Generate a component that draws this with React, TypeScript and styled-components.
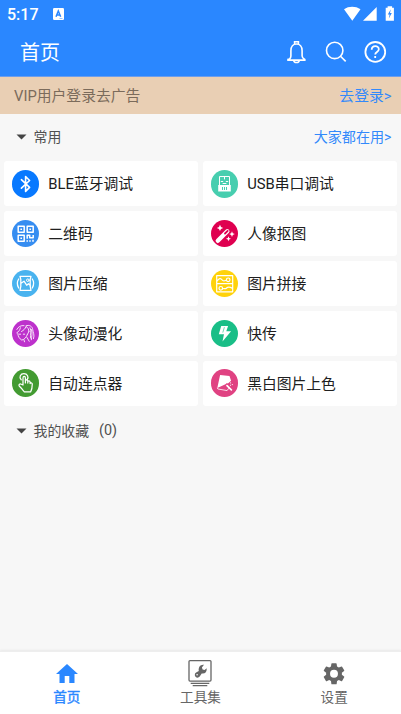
import React from "react";
import styled, { createGlobalStyle } from "styled-components";

const Global = createGlobalStyle`
  * { box-sizing: border-box; }
  body {
    margin: 0;
    background: #f7f7f7;
    font-family: Roboto, "Noto Sans CJK SC", sans-serif;
  }
`;

const Screen = styled.main`
  display: flex;
  flex-direction: column;
  width: 100%;
  height: 714px;
  overflow: hidden;
  background: #f7f7f7;
`;

const StatusBar = styled.div`
  display: flex;
  align-items: center;
  height: 27px;
  padding: 1px 7px 0 7px;
  background: #2a87ff;
  color: #fff;
  font-size: 16px;
  font-weight: 500;
  flex: none;
`;

const Clock = styled.span`
  width: 46px;
  padding-top: 1px;
  line-height: 26px;
`;

const StatusIcons = styled.div`
  display: flex;
  align-items: center;
  margin-left: auto;
  padding-bottom: 1px;
`;

const AppBar = styled.header`
  display: flex;
  align-items: center;
  height: 50px;
  padding: 0 14px 0 20px;
  background: #2a87ff;
  border-bottom: 1px solid #6c9eed;
  color: #fff;
  flex: none;
`;

const Title = styled.h1`
  margin: 0;
  padding-top: 2px;
  font-size: 20px;
  line-height: 30px;
  font-weight: 400;
`;

const Actions = styled.div`
  display: flex;
  gap: 15px;
  margin-left: auto;
  padding-top: 1px;
`;

const Banner = styled.div`
  display: flex;
  align-items: center;
  justify-content: space-between;
  height: 37px;
  padding: 0 9.5px 2px 14px;
  background: #e9cfb4;
  color: #7b6b5b;
  font-size: 14.8px;
  flex: none;
`;

const BlueLink = styled.span`
  color: #3289fb;
`;

const SectionHeader = styled.div<{ $height: number }>`
  display: flex;
  align-items: center;
  height: ${(p) => p.$height}px;
  padding: 0 9.5px 3px 16px;
  color: #505050;
  font-size: 13.9px;
  flex: none;

  svg { margin: 2px 6.5px 0 0; }
  ${BlueLink} {
    margin-left: auto;
    font-size: 14.1px;
  }
`;

const Count = styled.span`
  margin-left: 10px;
  padding-top: 1px;
  font-size: 14.4px;
`;

const Grid = styled.div`
  display: grid;
  grid-template-columns: 1fr 1fr;
  grid-auto-rows: 45.1px;
  gap: 4.7px;
  padding: 0 4px;
  flex: none;
`;

const Card = styled.div`
  display: flex;
  align-items: center;
  gap: 8.8px;
  padding-left: 8.1px;
  border-radius: 3px;
  background: #fff;
  color: #202020;
  font-size: 14.8px;
  white-space: nowrap;
`;

const CardLabel = styled.span`
  padding-bottom: 2px;
`;

const Disc = styled.span<{ $color: string }>`
  display: flex;
  width: 27.4px;
  height: 27.4px;
  border-radius: 50%;
  background: ${(p) => p.$color};
  flex: none;

  svg {
    width: 100%;
    height: 100%;
    fill: none;
    stroke: #fff;
    stroke-width: 1;
    stroke-linecap: round;
    stroke-linejoin: round;
  }
`;

const Nav = styled.nav`
  display: grid;
  grid-template-columns: repeat(3, 1fr);
  height: 63px;
  margin-top: auto;
  background: #fff;
  border-top: 1px solid #eee;
  box-shadow: 0 -1px 2px rgba(0, 0, 0, 0.06);
  flex: none;
`;

const NavItem = styled.div<{ $active?: boolean }>`
  display: flex;
  flex-direction: column;
  align-items: center;
  padding-top: 7px;
  color: ${(p) => (p.$active ? "#2a87ff" : "#666")};
  font-size: 13.6px;
  -webkit-text-stroke: ${(p) => (p.$active ? "0.4px currentColor" : "0")};
  line-height: 21px;
`;

const Caret = () => (
  <svg width="11" height="6" viewBox="0 0 11 6">
    <path d="M.5.5h10l-5 5z" fill="#444" />
  </svg>
);

const tools: { name: string; color: string; icon: React.ReactNode }[] = [
  {
    name: "BLE蓝牙调试",
    color: "#0879ff",
    icon: <path d="M9.4 9.7l8.2 7.7-4 4V6.5l4 4-8.2 7.7" strokeWidth="1.6" />,
  },
  {
    name: "USB串口调试",
    color: "#47ceaf",
    icon: (
      <>
        <path d="M8.5 15V6.5h10V15M13.5 7v2M10.2 11.5h1.6m3.4 0h1.6M12 13.5h3" />
        <path d="M7.2 15h12.6v6.5H7.2z" fill="#fff" stroke="none" />
        <path d="M11.5 17v3m2-3v3m2-3v3" stroke="#47ceaf" strokeLinecap="butt" />
      </>
    ),
  },
  {
    name: "二维码",
    color: "#368df1",
    icon: (
      <>
        <path d="M6.2 6.2h6v6h-6zM15.2 6.2h6v6h-6zM6.2 15.2h6v6h-6z" strokeWidth="1.5" />
        <path d="M8.4 8.4H10V10H8.4zM17.4 8.4H19V10h-1.6zM8.4 17.4H10V19H8.4z" fill="#fff" stroke="none" />
        <path d="M15.2 18.7v-3.5h2.5v2.5h3.5v-2.7M15.2 20.2v1.5m2.8-1.5v1.5m3-2v2" strokeWidth="1.5" strokeLinecap="butt" />
      </>
    ),
  },
  {
    name: "人像抠图",
    color: "#df0050",
    icon: (
      <>
        <path d="M6.8 20.8l9.5-9.5" strokeWidth="4.4" />
        <path d="M14 13.5l2.7-2.7" stroke="#df0050" strokeWidth="1.8" />
        <path
          d="M9 4.7l1 2.2 2.2 1-2.2 1-1 2.2-1-2.2-2.2-1 2.2-1zM21 11.3l.8 2 2 .8-2 .8-.8 2-.8-2-2-.8 2-.8zM17.5 16.3l.7 1.8 1.8.7-1.8.7-.7 1.8-.7-1.8-1.8-.7 1.8-.7z"
          fill="#fff"
          stroke="none"
        />
      </>
    ),
  },
  {
    name: "图片压缩",
    color: "#49b3ef",
    icon: (
      <>
        <path d="M8 6.3h11l-.8 3v7l.8 4H8l.8-4v-7zM9 13.2l3-2 2.7 4 1.8-1.5 2 2.2M6.7 9c-1.7 2.5-1.7 6 0 9M20.3 9c1.7 2.5 1.7 6 0 9" strokeWidth="1.3" />
        <circle cx="15.8" cy="10.2" r="1.3" />
      </>
    ),
  },
  {
    name: "图片拼接",
    color: "#ffd20a",
    icon: (
      <>
        <path d="M5.7 5.6h16v16.2h-16zM5.7 13.7h16M6.2 10.8c2-2.6 3.5-3 5-.8 1 1.5 2.4.8 4 .3M11.8 18.8c1.3-1 2.3.7 3.5-.5s3-1.9 5.9 0" strokeWidth="1.2" />
        <circle cx="17.2" cy="9.8" r="1.8" strokeWidth="1.2" />
        <circle cx="9.8" cy="18.3" r="1.8" strokeWidth="1.2" />
      </>
    ),
  },
  {
    name: "头像动漫化",
    color: "#bd31cc",
    icon: (
      <path
        d="M4.8 9.5c1.5-2.8 4-4.3 7.2-3.9M4.8 12.8c2.2-1.2 3.1-2.8 3.6-5M9.5 11.5c2.2-1.2 3.8-2.8 4.5-5 2 1 2.8 2.8 2.9 4.8M5.8 13.5c.2 3 1.6 5.2 4 6.6 2.8-.6 4.5-2.8 5.5-5.4M7.3 14.2h1.3m2.7 0h1.4M14 5.8c3.4-1.3 6.4.5 6.7 3.7.3 3 2.2 5.2.8 9.2M18 7.8c2 3.5-.2 6.8.6 10.3M19.5 9.5c1.2 3.7.2 6.7-.2 10.3M15 17.5l2.2 3.8M12 20l.5 1.8M17 11.3l-1.6 3.2"
        strokeWidth=".85"
      />
    ),
  },
  {
    name: "快传",
    color: "#19be87",
    icon: (
      <>
        <path d="M10.2 6h6.9l-1.8 5.2h4.8l-8.6 10.3 1.5-7.2H7.8z" fill="#fff" stroke="none" />
        <path d="M13.3 7.5l-1.4 4.7" stroke="#19be87" strokeWidth=".6" />
      </>
    ),
  },
  {
    name: "自动连点器",
    color: "#439b32",
    icon: (
      <path
        d="M9.2 10.8C6.7 8.2 8.4 4.7 11.9 4.7s5.2 3.4 3.3 5.8M11 16V8.9c0-2 2.4-2 2.4 0v5-2c0-1.3 2.2-1.3 2.4.2v2-1.3c.2-1.2 2.1-1 2.3.2v1.6c.3-1.3 2.2-1 2.2.5 0 3.2-.2 5.2-1.7 7.9h-6.2c-1.4-2-3.2-4.1-5.2-6-.9-1.3.8-2.7 2.1-1.7z"
        strokeWidth="1.25"
      />
    ),
  },
  {
    name: "黑白图片上色",
    color: "#e04282",
    icon: (
      <>
        <path d="M9.1 6l9.4.9 1.6 4.8-3.2 2.9-1-.6-1.4 1.3L6.3 19z" fill="#fff" stroke="none" />
        <path d="M6.4 19.2l.5.8 9.2 1.6 1.4-2" strokeWidth=".8" />
        <path d="M16 16.6l4.4 4.2" strokeWidth="1.7" />
        <path d="M19.5 13.9h.2m1.5 1.7h.2m-2 .7h.1" />
      </>
    ),
  },
];

export default function App() {
  return (
    <Screen>
      <Global />
      <StatusBar>
        <Clock>5:17</Clock>
        <svg width="11" height="12" viewBox="0 0 11 12">
          <rect width="11" height="12" rx="1.2" fill="#fff" />
          <path d="M3 8.8L5.3 3l2.4 5.8M3.8 7.1h3" fill="none" stroke="#2a87ff" strokeWidth="1.5" />
          <path d="M6.5 10.5h3" stroke="#2a87ff" strokeWidth=".5" />
        </svg>
        <StatusIcons>
          <svg width="50" height="16" viewBox="0 0 50 16" fill="#fff">
            <path d="M0 3.2C4.8-.1 11.5-.1 16.5 3.2L8.3 14.7zM19 14.7h13.7V1z" />
            <path d="M43.6.2h4.5v1.6h1.8v12.9h-8.2V1.8h1.9z" />
            <path d="M46.8 3.2l-3 5.4h1.8l-.8 4 3-5.5h-1.8z" fill="#2a87ff" />
          </svg>
        </StatusIcons>
      </StatusBar>
      <AppBar>
        <Title>首页</Title>
        <Actions>
          <svg width="24" height="24" viewBox="0 0 24 24" fill="none" stroke="#fff" strokeWidth="1.6">
            <path d="M4.5 19.1c1-.8 1.4-1.7 1.4-3v-5.4C5.9 6.6 8.2 4 11.5 4s5.6 2.6 5.6 6.7v5.4c0 1.3.5 2.2 2.7 3.4v.6H3v-.7zM9.6 4V1.7h3.8V4M8.7 20.2c.1 3.1 5.5 3.1 5.6 0" />
          </svg>
          <svg width="24" height="24" viewBox="0 0 24 24" fill="none" stroke="#fff" strokeWidth="1.6">
            <circle cx="10.7" cy="10.4" r="8.2" />
            <path d="M16.5 16.3l5.2 5.1" />
          </svg>
          <svg width="24" height="24" viewBox="0 0 24 24" fill="none" stroke="#fff" strokeWidth="1.8">
            <circle cx="12.3" cy="11.9" r="9.9" />
            <path d="M8.7 9.7c.1-4.8 7.1-4.6 7.1-.4 0 2.7-3.6 2.7-3.6 5.3M12.2 16v1.9" />
          </svg>
        </Actions>
      </AppBar>
      <Banner>
        <span>VIP用户登录去广告</span>
        <BlueLink>去登录&gt;</BlueLink>
      </Banner>
      <SectionHeader $height={47.4}>
        <Caret />
        <span>常用</span>
        <BlueLink>大家都在用&gt;</BlueLink>
      </SectionHeader>
      <Grid>
        {tools.map((tool) => (
          <Card key={tool.name}>
            <Disc $color={tool.color}>
              <svg viewBox="0 0 27.4 27.4">{tool.icon}</svg>
            </Disc>
            <CardLabel>{tool.name}</CardLabel>
          </Card>
        ))}
      </Grid>
      <SectionHeader $height={52}>
        <Caret />
        <span>我的收藏</span>
        <Count>(0)</Count>
      </SectionHeader>
      <Nav>
        <NavItem $active>
          <svg width="24" height="28" viewBox="0 0 24 28">
            <path d="M12 5L1 15h3.5v9h5.2v-7h4.6v7h5.2v-9H23z" fill="currentColor" />
          </svg>
          <span>首页</span>
        </NavItem>
        <NavItem>
          <svg width="24" height="28" viewBox="0 0 24 28" fill="none" stroke="currentColor" strokeWidth="1.3">
            <rect x="1" y="1.6" width="22" height="20.5" rx="1" />
            <path d="M2.7 24.4h18.6M4.7 26.6h14.6" strokeWidth="1.2" />
            <path
              d="M16 5.8l-2.1 2.8.7 2 2 .5 2.1-1.8c.3 3.8-1.8 5.8-5 5.2l-2 3.1c-1.7 2-5 .9-4.9-1.8.1-2.2 2.2-2.7 4-3.7-.7-3.9 1.6-6.9 5.2-6.3z"
              fill="currentColor"
              stroke="none"
            />
            <circle cx="9.1" cy="15.8" r=".8" fill="#fff" stroke="none" />
          </svg>
          <span>工具集</span>
        </NavItem>
        <NavItem>
          <svg width="26" height="28" viewBox="0 0 26 28">
            <path
              transform="translate(-.2 1.6) scale(1.1)"
              d="M19.14 12.94c.04-.3.06-.61.06-.94s-.02-.64-.07-.94l2.03-1.58a.5.5 0 0 0 .12-.61l-1.92-3.32a.5.5 0 0 0-.59-.22l-2.39.96a7 7 0 0 0-1.62-.94l-.36-2.54a.48.48 0 0 0-.48-.41h-3.84a.48.48 0 0 0-.47.41l-.36 2.54a7 7 0 0 0-1.62.94l-2.39-.96a.48.48 0 0 0-.59.22L2.74 8.87a.48.48 0 0 0 .12.61l2.03 1.58a6 6 0 0 0 0 1.88l-2.03 1.58a.5.5 0 0 0-.12.61l1.92 3.32c.12.22.37.29.59.22l2.39-.96c.5.38 1.03.7 1.62.94l.36 2.54c.05.24.24.41.48.41h3.84c.24 0 .44-.17.47-.41l.36-2.54a7 7 0 0 0 1.62-.94l2.39.96c.22.08.47 0 .59-.22l1.92-3.32a.48.48 0 0 0-.12-.61zM12 15.6a3.6 3.6 0 1 1 0-7.2 3.6 3.6 0 0 1 0 7.2z"
              fill="currentColor"
            />
          </svg>
          <span>设置</span>
        </NavItem>
      </Nav>
    </Screen>
  );
}
